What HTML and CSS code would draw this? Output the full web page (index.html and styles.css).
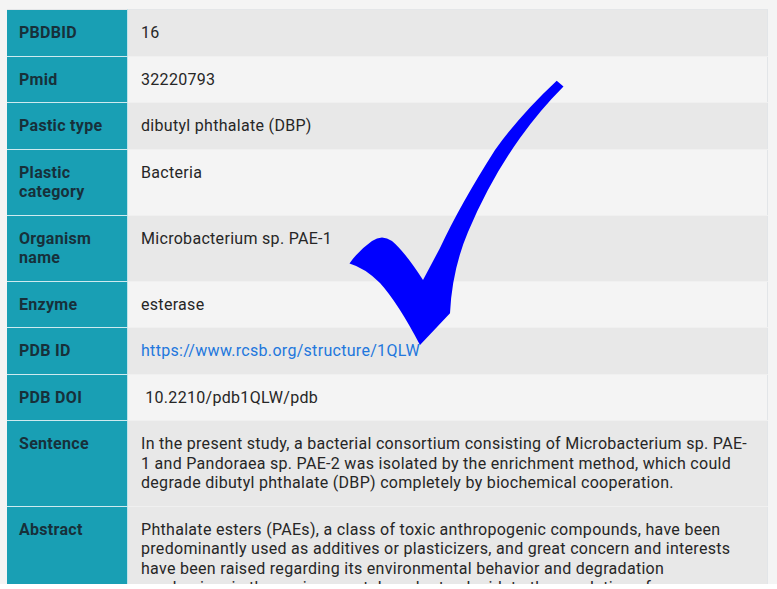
FILE: index.html
```html
<!DOCTYPE html>
<html lang="en">
<head>
<meta charset="utf-8">
<title>PBDB entry 16</title>
<link rel="stylesheet" href="styles.css">
</head>
<body>
<div class="page">
  <table class="detail">
    <tbody>
      <tr class="odd"><th>PBDBID</th><td>16</td></tr>
      <tr class="even"><th>Pmid</th><td>32220793</td></tr>
      <tr class="odd"><th>Pastic type</th><td>dibutyl phthalate (DBP)</td></tr>
      <tr class="even"><th>Plastic category</th><td>Bacteria</td></tr>
      <tr class="odd"><th>Organism name</th><td>Microbacterium sp. PAE-1</td></tr>
      <tr class="even"><th>Enzyme</th><td>esterase</td></tr>
      <tr class="odd"><th>PDB ID</th><td><a class="link" href="#">https://www.rcsb.org/structure/1QLW</a></td></tr>
      <tr class="even"><th>PDB DOI</th><td>&nbsp;10.2210/pdb1QLW/pdb</td></tr>
      <tr class="odd"><th>Sentence</th><td>In the present study, a bacterial consortium consisting of Microbacterium sp. PAE-1 and Pandoraea sp. PAE-2 was isolated by the enrichment method, which could degrade dibutyl phthalate (DBP) completely by biochemical cooperation.</td></tr>
      <tr class="odd"><th>Abstract</th><td>Phthalate esters (PAEs), a class of toxic anthropogenic compounds, have been predominantly used as additives or plasticizers, and great concern and interests have been raised regarding its environmental behavior and degradation mechanism in the environment. In order to elucidate the regulation of</td></tr>
    </tbody>
  </table>
  <svg class="check" viewBox="0 0 777 589" width="777" height="589" aria-hidden="true">
    <path fill="#0000ff" d="M556.7 80.7 Q520 115 495 150 Q460 205 440 248 L423 280 Q405 252 392 241 Q382 234 372 241 Q358 251 349.5 263.5 Q365 268 380 283 Q398 303 420 345 L450 313.3 Q452 270 468 232 Q490 180 520 138 Q540 110 563.5 86.5 Z"/>
  </svg>
</div>
</body>
</html>
```
FILE: styles.css
```css
html {
  background: #ffffff;
}
body {
  margin: 0;
  font-family: Roboto, "Liberation Sans", Arial, sans-serif;
}
.page {
  position: relative;
  height: 584px;
  overflow: hidden;
  background: #f4f4f4;
  padding: 9px 0 0 7px;
  box-sizing: border-box;
}
.detail {
  width: 761px;
  border-collapse: collapse;
  table-layout: fixed;
  font-size: 16px;
  line-height: 19.5px;
  letter-spacing: 0.3px;
  border-top: 1px solid #e4e6e8;
  border-right: 1px solid #e2e5e8;
}
.detail th {
  width: 96px;
  text-align: left;
  vertical-align: top;
  padding: 13px 12px 13px 12px;
  background: #199fb4;
  color: #17303a;
  font-weight: 700;
  border-right: 1px solid #bfe3ea;
  border-bottom: 1px solid #cfeaef;
}
.detail td {
  vertical-align: top;
  padding: 13px 14px 13px 13px;
  color: #262626;
  border-bottom: 1px solid #f0f0f0;
}
.odd td {
  background: #e8e8e8;
}
.even td {
  background: #f4f4f4;
}
.link {
  color: #2277dd;
  text-decoration: none;
}
.check {
  position: absolute;
  left: 0;
  top: 0;
  pointer-events: none;
}
```
